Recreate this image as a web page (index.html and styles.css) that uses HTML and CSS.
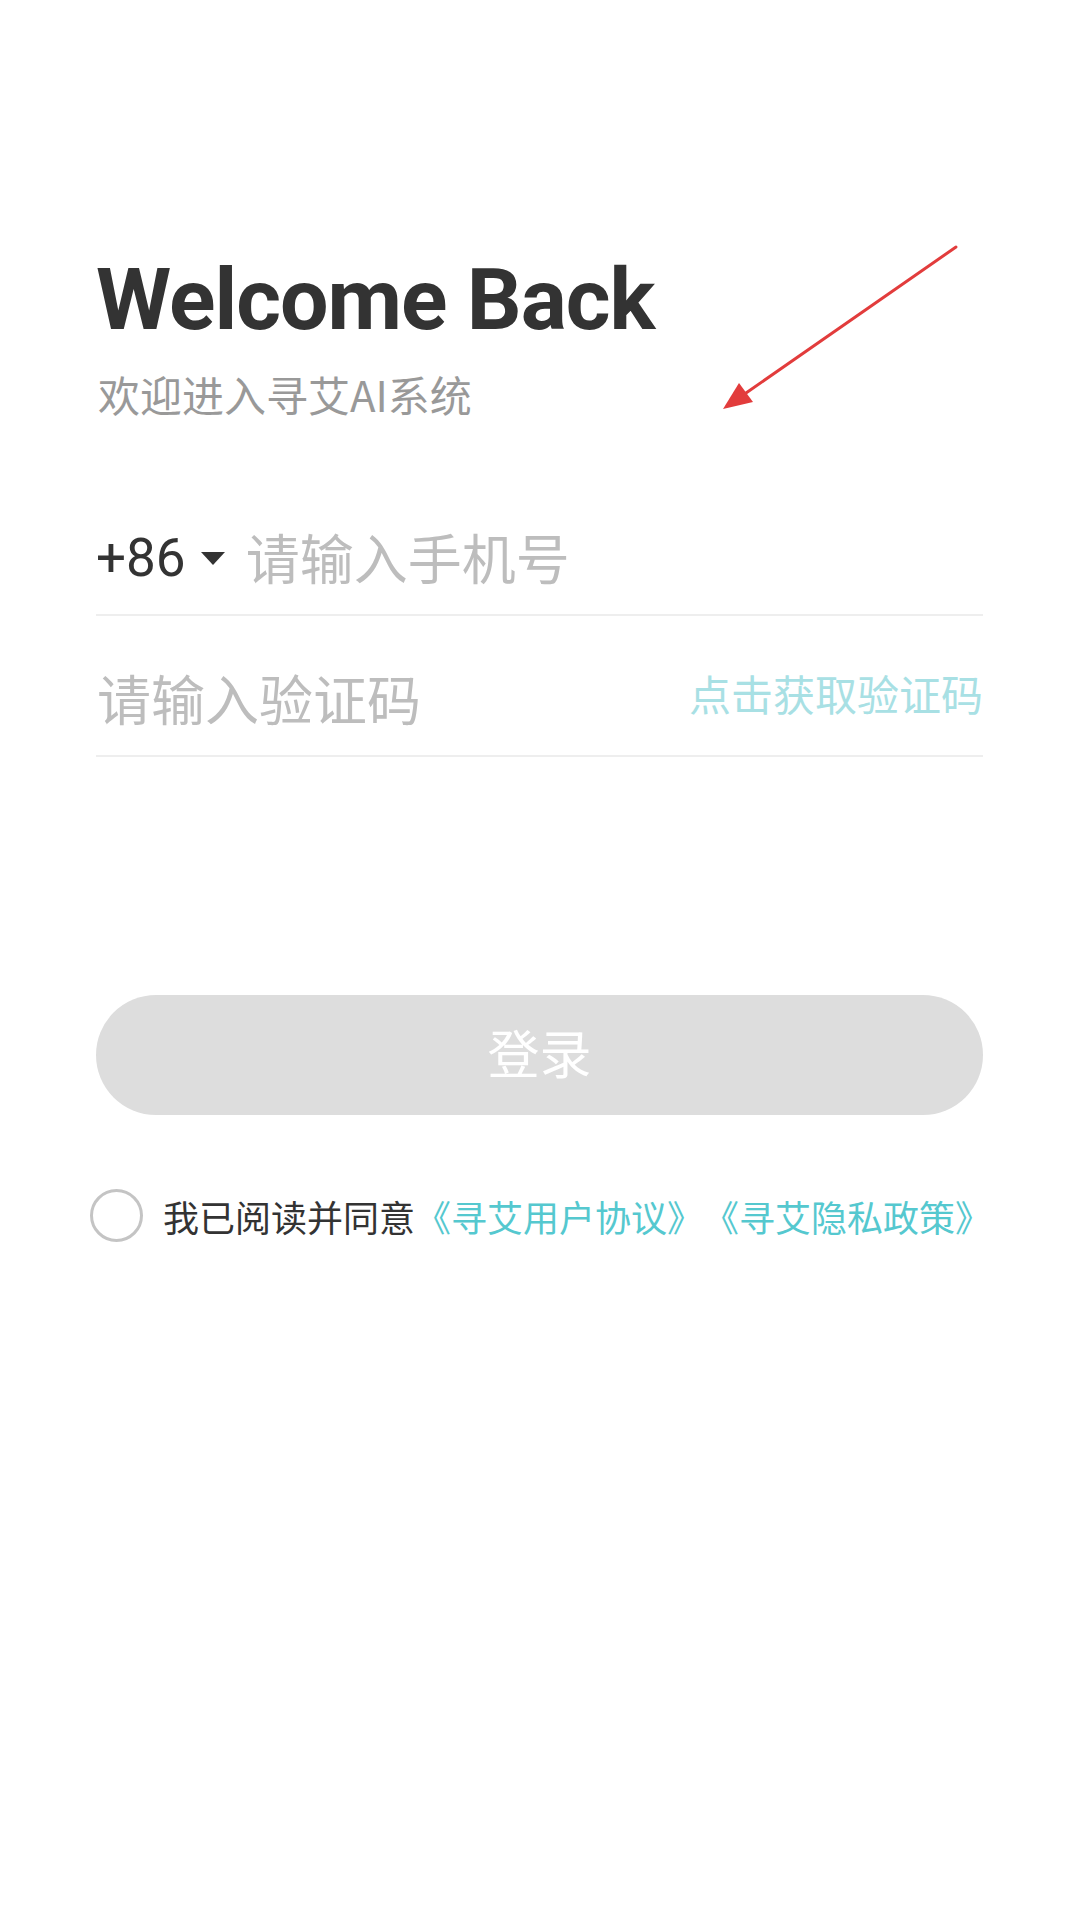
FILE: index.html
```html
<!DOCTYPE html>
<html lang="zh-CN">
<head>
<meta charset="utf-8">
<title>登录</title>
<link rel="stylesheet" href="styles.css">
</head>
<body>
<div class="page">
  <h1 class="title">Welcome Back</h1>
  <p class="subtitle">欢迎进入寻艾AI系统</p>

  <div class="field phone">
    <span class="code">+86</span>
    <span class="caret"></span>
    <span class="placeholder">请输入手机号</span>
  </div>

  <div class="field verify">
    <span class="placeholder">请输入验证码</span>
    <span class="get-code">点击获取验证码</span>
  </div>

  <button class="login" type="button">登录</button>

  <div class="agree">
    <span class="check"></span>
    <span class="agree-text">我已阅读并同意<a class="link">《寻艾用户协议》</a><a class="link">《寻艾隐私政策》</a></span>
  </div>

  <svg class="annot-arrow" width="280" height="200" viewBox="0 0 280 200">
    <line x1="256" y1="17" x2="46" y2="163" stroke="#e23c3c" stroke-width="3" stroke-linecap="round"/>
    <polygon points="23,179 53,172 39,153" fill="#e23c3c"/>
  </svg>
</div>
</body>
</html>
```

FILE: styles.css
```css
html, body {
  margin: 0;
  padding: 0;
  background: #ffffff;
}

body {
  font-family: Roboto, "Noto Sans CJK SC", sans-serif;
}

.page {
  position: relative;
  width: 1080px;
  min-height: 1920px;
  box-sizing: border-box;
  padding: 250px 97px 0 96px;
}

.title {
  margin: 0;
  font-family: Roboto, "Noto Sans CJK SC", sans-serif;
  font-weight: 700;
  font-size: 86px;
  line-height: 100px;
  color: #333333;
  letter-spacing: -1px;
}

.subtitle {
  margin: 19px 0 0 2px;
  font-family: "Noto Sans CJK SC", sans-serif;
  font-size: 42px;
  line-height: 50px;
  color: #999999;
}

.field {
  display: flex;
  align-items: center;
  height: 112px;
  border-bottom: 2px solid #eeeeee;
}

.phone {
  margin-top: 83px;
}

.verify {
  margin-top: 27px;
  justify-content: space-between;
}

.code {
  font-family: Roboto, sans-serif;
  font-size: 53px;
  color: #333333;
  line-height: 1;
}

.caret {
  width: 0;
  height: 0;
  margin: 0 21px 0 15px;
  border-left: 12px solid transparent;
  border-right: 12px solid transparent;
  border-top: 13px solid #333333;
}

.placeholder {
  font-family: "Noto Sans CJK SC", sans-serif;
  font-size: 54px;
  color: #bdbdbd;
  line-height: 1;
  margin-top: -2px;
}

.verify .placeholder {
  margin-left: 1px;
}

.get-code {
  font-family: "Noto Sans CJK SC", sans-serif;
  font-size: 42px;
  color: #a8e0e4;
  line-height: 1;
  margin-top: -12px;
}

.login {
  display: block;
  width: 100%;
  height: 120px;
  margin-top: 238px;
  border: none;
  border-radius: 60px;
  background: #dddddd;
  color: #ffffff;
  font-family: "Noto Sans CJK SC", sans-serif;
  font-size: 52px;
  padding: 0 0 8px;
}

.agree {
  display: flex;
  align-items: center;
  margin-top: 74px;
  margin-left: -6px;
}

.check {
  width: 47px;
  height: 47px;
  border: 3px solid #c4c4c4;
  border-radius: 50%;
  flex: none;
}

.agree-text {
  margin-left: 20px;
  font-family: "Noto Sans CJK SC", sans-serif;
  font-size: 36px;
  line-height: 52px;
  color: #333333;
  white-space: nowrap;
  text-spacing-trim: space-all;
}

.link {
  color: #55c8cf;
  text-decoration: none;
}

.annot-arrow {
  position: absolute;
  left: 700px;
  top: 230px;
}
```
